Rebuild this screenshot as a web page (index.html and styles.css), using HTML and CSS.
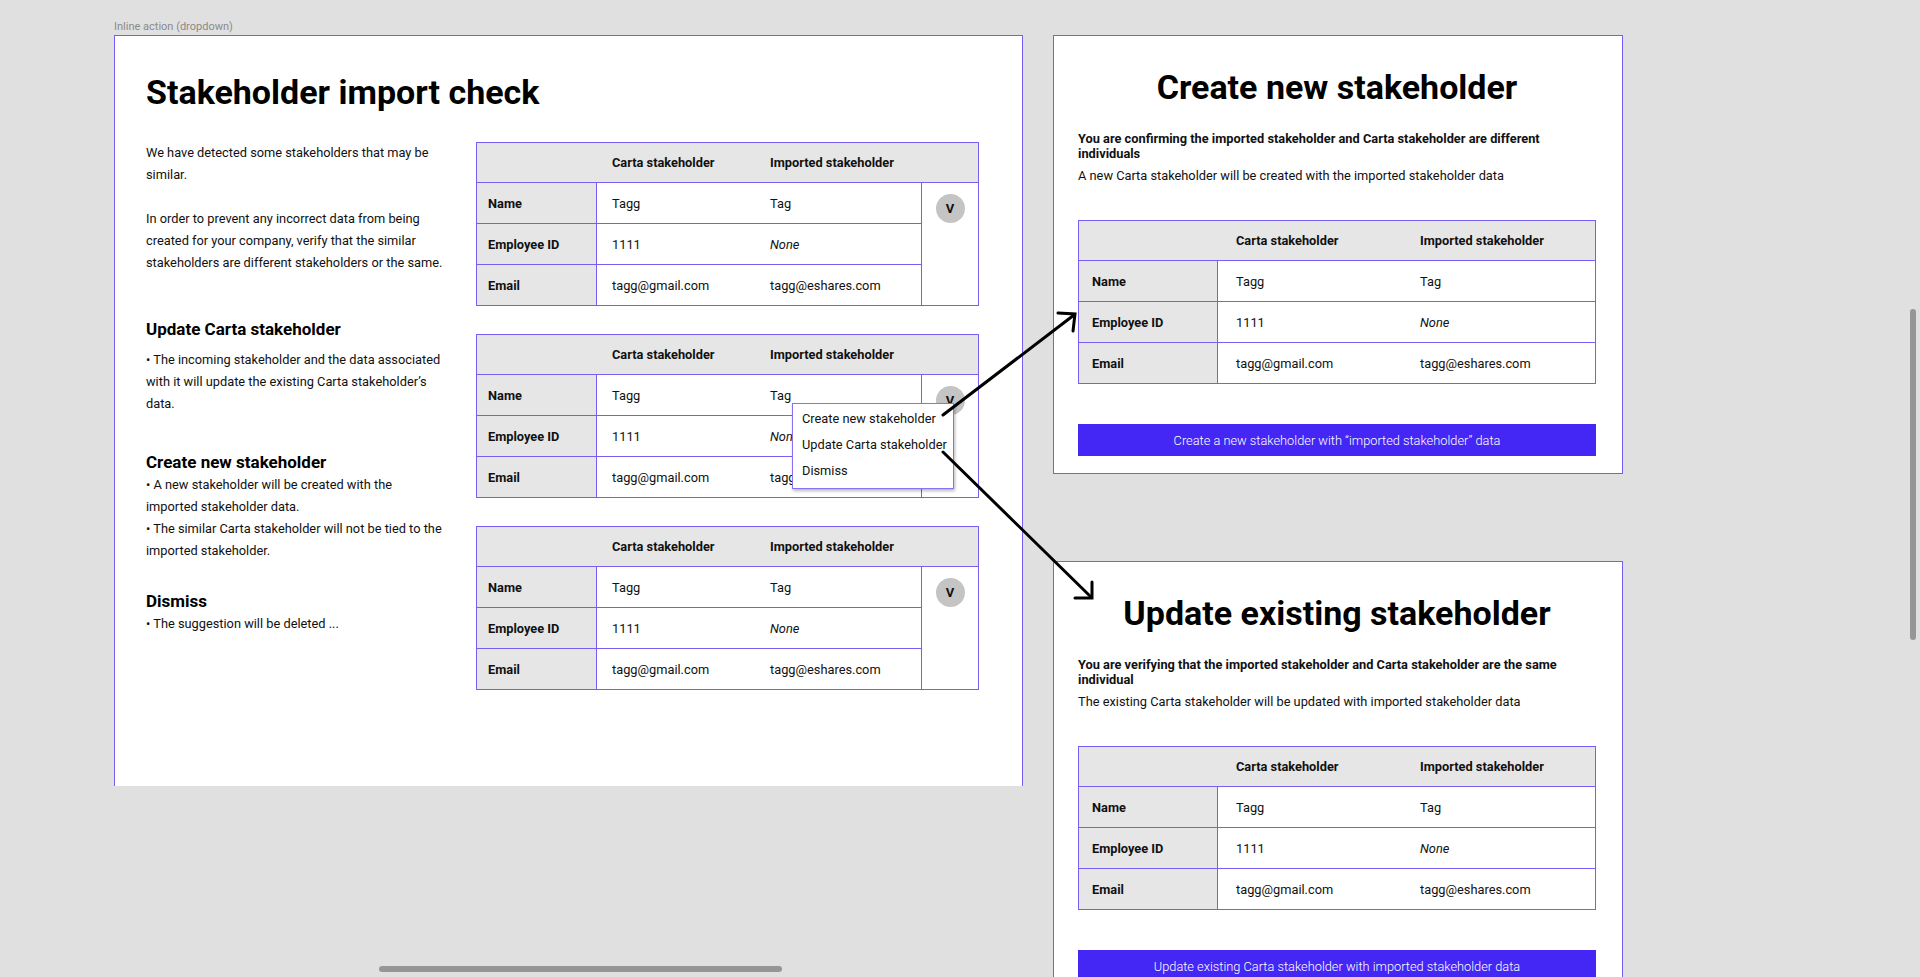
FILE: index.html
```html
<!DOCTYPE html>
<html lang="en">
<head>
<meta charset="utf-8">
<title>Stakeholder import check</title>
<link rel="stylesheet" href="styles.css">
</head>
<body>
<div class="canvas">
  <div class="frame-label">Inline action (dropdown)</div>

  <section class="frame frame-main">
    <h1 class="main-title">Stakeholder import check</h1>
    <div class="main-body">
      <div class="explain">
        <p class="para">We have detected some stakeholders that may be<br>similar.</p>
        <p class="para para-2">In order to prevent any incorrect data from being<br>created for your company, verify that the similar<br>stakeholders are different stakeholders or the same.</p>
        <h2 class="sub sub-1">Update Carta stakeholder</h2>
        <p class="para bul-1">• The incoming stakeholder and the data associated<br>with it will update the existing Carta stakeholder’s<br>data.</p>
        <h2 class="sub sub-2">Create new stakeholder</h2>
        <p class="para bul-2">• A new stakeholder will be created with the<br>imported stakeholder data.<br>• The similar Carta stakeholder will not be tied to the<br>imported stakeholder.</p>
        <h2 class="sub sub-3">Dismiss</h2>
        <p class="para bul-3">• The suggestion will be deleted ...</p>
      </div>

      <div class="tables">
        <div class="cmp">
          <div class="cmp-head"><span class="hc hc-1">Carta stakeholder</span><span class="hc hc-2">Imported stakeholder</span></div>
          <div class="cmp-body">
            <div class="cmp-rows">
              <div class="cmp-row"><div class="lbl">Name</div><div class="val v1">Tagg</div><div class="val v2">Tag</div></div>
              <div class="cmp-row"><div class="lbl">Employee ID</div><div class="val v1">1111</div><div class="val v2 none">None</div></div>
              <div class="cmp-row"><div class="lbl">Email</div><div class="val v1">tagg@gmail.com</div><div class="val v2">tagg@eshares.com</div></div>
            </div>
            <div class="cmp-act"><span class="vbtn">V</span></div>
          </div>
        </div>

        <div class="cmp">
          <div class="cmp-head"><span class="hc hc-1">Carta stakeholder</span><span class="hc hc-2">Imported stakeholder</span></div>
          <div class="cmp-body">
            <div class="cmp-rows">
              <div class="cmp-row"><div class="lbl">Name</div><div class="val v1">Tagg</div><div class="val v2">Tag</div></div>
              <div class="cmp-row"><div class="lbl">Employee ID</div><div class="val v1">1111</div><div class="val v2 none">None</div></div>
              <div class="cmp-row"><div class="lbl">Email</div><div class="val v1">tagg@gmail.com</div><div class="val v2">tagg@eshares.com</div></div>
            </div>
            <div class="cmp-act"><span class="vbtn">V</span></div>
          </div>
        </div>

        <div class="cmp">
          <div class="cmp-head"><span class="hc hc-1">Carta stakeholder</span><span class="hc hc-2">Imported stakeholder</span></div>
          <div class="cmp-body">
            <div class="cmp-rows">
              <div class="cmp-row"><div class="lbl">Name</div><div class="val v1">Tagg</div><div class="val v2">Tag</div></div>
              <div class="cmp-row"><div class="lbl">Employee ID</div><div class="val v1">1111</div><div class="val v2 none">None</div></div>
              <div class="cmp-row"><div class="lbl">Email</div><div class="val v1">tagg@gmail.com</div><div class="val v2">tagg@eshares.com</div></div>
            </div>
            <div class="cmp-act"><span class="vbtn">V</span></div>
          </div>
        </div>
      </div>
    </div>
  </section>

  <div class="menu">
    <div class="menu-item">Create new stakeholder</div>
    <div class="menu-item">Update Carta stakeholder</div>
    <div class="menu-item">Dismiss</div>
  </div>

  <section class="frame frame-side frame-create">
    <h1 class="side-title">Create new stakeholder</h1>
    <p class="side-strong">You are confirming the imported stakeholder and Carta stakeholder are different<br>individuals</p>
    <p class="side-text">A new Carta stakeholder will be created with the imported stakeholder data</p>
    <div class="cmp cmp-wide">
      <div class="cmp-head"><span class="hc hc-1">Carta stakeholder</span><span class="hc hc-2">Imported stakeholder</span></div>
      <div class="cmp-body">
        <div class="cmp-rows">
          <div class="cmp-row"><div class="lbl">Name</div><div class="val v1">Tagg</div><div class="val v2">Tag</div></div>
          <div class="cmp-row"><div class="lbl">Employee ID</div><div class="val v1">1111</div><div class="val v2 none">None</div></div>
          <div class="cmp-row"><div class="lbl">Email</div><div class="val v1">tagg@gmail.com</div><div class="val v2">tagg@eshares.com</div></div>
        </div>
      </div>
    </div>
    <div class="cta">Create a new stakeholder with “imported stakeholder” data</div>
  </section>

  <section class="frame frame-side frame-update">
    <h1 class="side-title">Update existing stakeholder</h1>
    <p class="side-strong">You are verifying that the imported stakeholder and Carta stakeholder are the same<br>individual</p>
    <p class="side-text">The existing Carta stakeholder will be updated with imported stakeholder data</p>
    <div class="cmp cmp-wide">
      <div class="cmp-head"><span class="hc hc-1">Carta stakeholder</span><span class="hc hc-2">Imported stakeholder</span></div>
      <div class="cmp-body">
        <div class="cmp-rows">
          <div class="cmp-row"><div class="lbl">Name</div><div class="val v1">Tagg</div><div class="val v2">Tag</div></div>
          <div class="cmp-row"><div class="lbl">Employee ID</div><div class="val v1">1111</div><div class="val v2 none">None</div></div>
          <div class="cmp-row"><div class="lbl">Email</div><div class="val v1">tagg@gmail.com</div><div class="val v2">tagg@eshares.com</div></div>
        </div>
      </div>
    </div>
    <div class="cta">Update existing Carta stakeholder with imported stakeholder data</div>
  </section>

  <svg class="arrows" width="1920" height="977" viewBox="0 0 1920 977" aria-hidden="true">
    <g fill="none" stroke="#000" stroke-width="3" stroke-linecap="round" stroke-linejoin="miter">
      <path d="M943 415 L1074 315"/>
      <path d="M1058 313 L1075 314 L1073 331"/>
      <path d="M943 452 L1091 597"/>
      <path d="M1075 598 L1092 598 L1092 582"/>
    </g>
  </svg>

  <div class="scroll-v"></div>
  <div class="scroll-h"></div>
</div>
</body>
</html>
```

FILE: styles.css
```css
:root {
  --pu: #7b5cf5;
  --cell: #e6e6e6;
  --ink: #111;
  --fs: 12.8px;
}

* { box-sizing: border-box; }

html, body {
  margin: 0;
  padding: 0;
}

body {
  font-family: Roboto, "Liberation Sans", Arial, sans-serif;
  color: var(--ink);
  background: #e0e0e0;
}

.canvas {
  position: relative;
  width: 1920px;
  height: 977px;
  overflow: hidden;
  background: #e0e0e0;
}

.frame-label {
  position: absolute;
  left: 114px;
  top: 20px;
  font-size: 11px;
  line-height: 14px;
  color: #8a8a8a;
}

.frame {
  position: absolute;
  background: #fff;
  border: 1px solid var(--pu);
}

/* ---------- main frame ---------- */
.frame-main {
  left: 114px;
  top: 35px;
  width: 909px;
  height: 751px;
  border-bottom: 0;
  padding: 36px 0 0 31px;
}

.main-title {
  margin: 0;
  font-size: 34px;
  line-height: 41px;
  font-weight: 700;
  color: #000;
}

.main-body {
  display: flex;
  gap: 30px;
  margin-top: 29px;
}

.explain {
  width: 300px;
  flex: none;
  white-space: nowrap;
}

.para {
  margin: 0;
  font-size: var(--fs);
  line-height: 22px;
}

.para-2 { margin-top: 22px; }

.sub {
  margin: 0;
  font-size: 17px;
  line-height: 22px;
  font-weight: 700;
  color: #000;
}

.sub-1 { margin-top: 44px; }
.bul-1 { margin-top: 9px; }
.sub-2 { margin-top: 36px; }
.bul-2 { margin-top: 1px; }
.sub-3 { margin-top: 28px; }
.bul-3 { margin-top: 1px; }

.tables {
  display: flex;
  flex-direction: column;
  gap: 28px;
}

/* ---------- comparison table ---------- */
.cmp {
  --lbl: 120px;
  --c1: 157px;
  --pad1: 15px;
  --pad2: 16px;
  --lpad: 11px;
  width: 503px;
  border: 1px solid var(--pu);
  background: #fff;
  font-size: var(--fs);
  white-space: nowrap;
}

.cmp-head {
  display: flex;
  align-items: center;
  height: 40px;
  background: var(--cell);
  border-bottom: 1px solid var(--pu);
  padding-left: var(--lbl);
  font-weight: 700;
}

.hc-1 {
  width: var(--c1);
  padding-left: var(--pad1);
}

.hc-2 {
  padding-left: var(--pad2);
}

.cmp-body {
  display: flex;
}

.cmp-rows {
  flex: 1;
}

.cmp-row {
  display: flex;
  height: 41px;
  border-bottom: 1px solid var(--pu);
}

.cmp-row:last-child {
  height: 40px;
  border-bottom: 0;
}

.lbl {
  width: var(--lbl);
  flex: none;
  display: flex;
  align-items: center;
  padding-left: var(--lpad);
  background: var(--cell);
  border-right: 1px solid var(--pu);
  font-weight: 700;
}

.val {
  display: flex;
  align-items: center;
}

.v1 {
  width: var(--c1);
  flex: none;
  padding-left: var(--pad1);
}

.v2 {
  flex: 1;
  padding-left: var(--pad2);
}

.none { font-style: italic; }

.cmp-act {
  width: 57px;
  flex: none;
  display: flex;
  justify-content: center;
  align-items: flex-start;
  padding-top: 11px;
  border-left: 1px solid var(--pu);
}

.vbtn {
  width: 29px;
  height: 29px;
  border-radius: 50%;
  background: #c4c4c4;
  display: flex;
  align-items: center;
  justify-content: center;
  font-weight: 700;
  font-size: 13px;
}

.cmp-wide {
  --lbl: 139px;
  --c1: 184px;
  --pad1: 18px;
  --pad2: 18px;
  --lpad: 13px;
  width: 518px;
}

/* ---------- dropdown menu ---------- */
.menu {
  position: absolute;
  left: 792px;
  top: 403px;
  width: 162px;
  height: 86px;
  padding: 2px 0 0 9px;
  background: #fff;
  border: 1px solid #8a70f5;
  box-shadow: 1px 2px 3px rgba(0, 0, 0, 0.28);
  font-size: var(--fs);
  white-space: nowrap;
}

.menu-item {
  line-height: 26px;
}

/* ---------- side frames ---------- */
.frame-side {
  left: 1053px;
  width: 570px;
  padding: 31px 26px 17px 24px;
}

.frame-create { top: 35px; }
.frame-update { top: 561px; height: 460px; }

.side-title {
  margin: 0;
  text-align: center;
  font-size: 34px;
  line-height: 41px;
  font-weight: 700;
  color: #000;
}

.side-strong {
  margin: 23px 0 0;
  font-size: var(--fs);
  line-height: 15px;
  font-weight: 700;
  white-space: nowrap;
}

.side-text {
  margin: 7px 0 0;
  font-size: var(--fs);
  line-height: 16px;
  white-space: nowrap;
}

.frame-side .cmp {
  margin-top: 36px;
}

.cta {
  margin-top: 40px;
  height: 32px;
  display: flex;
  align-items: center;
  justify-content: center;
  background: #4426f5;
  color: #fff;
  font-size: var(--fs);
  font-weight: 300;
}

/* ---------- overlays ---------- */
.arrows {
  position: absolute;
  left: 0;
  top: 0;
  pointer-events: none;
}

.scroll-v {
  position: absolute;
  left: 1910px;
  top: 309px;
  width: 6px;
  height: 331px;
  border-radius: 3px;
  background: #969696;
}

.scroll-h {
  position: absolute;
  left: 379px;
  top: 966px;
  width: 403px;
  height: 6px;
  border-radius: 3px;
  background: #969696;
}
```
